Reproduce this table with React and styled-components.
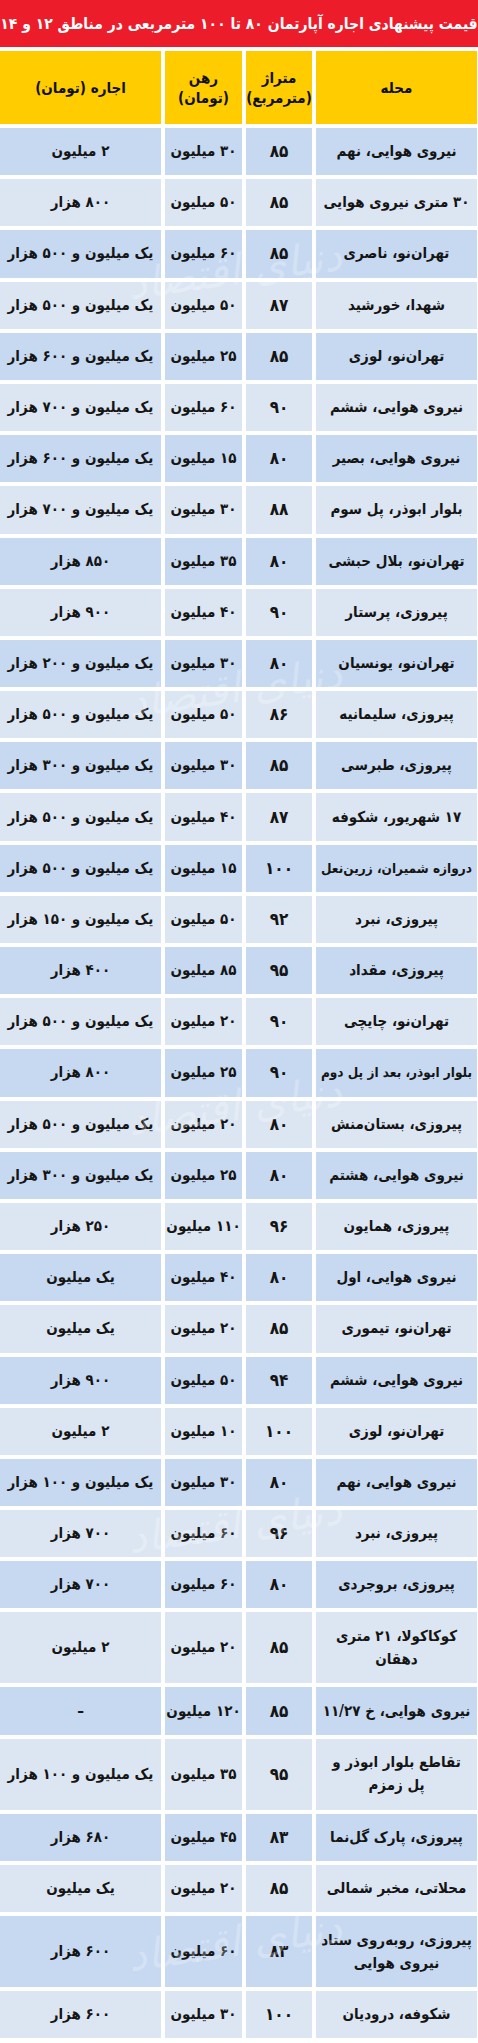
import React from 'react';
import styled, { createGlobalStyle } from 'styled-components';

const GlobalStyle = createGlobalStyle`
	html, body {
		margin: 0;
		padding: 0;
		background: #ffffff;
	}
	body {
		font-family: "DejaVu Sans Condensed", "DejaVu Sans", sans-serif;
	}
`;

const filas = [
	['نیروی هوایی، نهم', '۸۵', '۳۰ میلیون', '۲ میلیون'],
	['۳۰ متری نیروی هوایی', '۸۵', '۵۰ میلیون', '۸۰۰ هزار'],
	['تهران‌نو، ناصری', '۸۵', '۶۰ میلیون', 'یک میلیون و ۵۰۰ هزار'],
	['شهدا، خورشید', '۸۷', '۵۰ میلیون', 'یک میلیون و ۵۰۰ هزار'],
	['تهران‌نو، لوزی', '۸۵', '۲۵ میلیون', 'یک میلیون و ۶۰۰ هزار'],
	['نیروی هوایی، ششم', '۹۰', '۶۰ میلیون', 'یک میلیون و ۷۰۰ هزار'],
	['نیروی هوایی، بصیر', '۸۰', '۱۵ میلیون', 'یک میلیون و ۶۰۰ هزار'],
	['بلوار ابوذر، پل سوم', '۸۸', '۳۰ میلیون', 'یک میلیون و ۷۰۰ هزار'],
	['تهران‌نو، بلال حبشی', '۸۰', '۳۵ میلیون', '۸۵۰ هزار'],
	['پیروزی، پرستار', '۹۰', '۴۰ میلیون', '۹۰۰ هزار'],
	['تهران‌نو، یونسیان', '۸۰', '۳۰ میلیون', 'یک میلیون و ۲۰۰ هزار'],
	['پیروزی، سلیمانیه', '۸۶', '۵۰ میلیون', 'یک میلیون و ۵۰۰ هزار'],
	['پیروزی، طبرسی', '۸۵', '۳۰ میلیون', 'یک میلیون و ۳۰۰ هزار'],
	['۱۷ شهریور، شکوفه', '۸۷', '۴۰ میلیون', 'یک میلیون و ۵۰۰ هزار'],
	['دروازه شمیران، زرین‌نعل', '۱۰۰', '۱۵ میلیون', 'یک میلیون و ۵۰۰ هزار'],
	['پیروزی، نبرد', '۹۲', '۵۰ میلیون', 'یک میلیون و ۱۵۰ هزار'],
	['پیروزی، مقداد', '۹۵', '۸۵ میلیون', '۴۰۰ هزار'],
	['تهران‌نو، چایچی', '۹۰', '۲۰ میلیون', 'یک میلیون و ۵۰۰ هزار'],
	['بلوار ابوذر، بعد از پل دوم', '۹۰', '۲۵ میلیون', '۸۰۰ هزار'],
	['پیروزی، بستان‌منش', '۸۰', '۲۰ میلیون', 'یک میلیون و ۵۰۰ هزار'],
	['نیروی هوایی، هشتم', '۸۰', '۲۵ میلیون', 'یک میلیون و ۳۰۰ هزار'],
	['پیروزی، همایون', '۹۶', '۱۱۰ میلیون', '۲۵۰ هزار'],
	['نیروی هوایی، اول', '۸۰', '۴۰ میلیون', 'یک میلیون'],
	['تهران‌نو، تیموری', '۸۵', '۲۰ میلیون', 'یک میلیون'],
	['نیروی هوایی، ششم', '۹۴', '۵۰ میلیون', '۹۰۰ هزار'],
	['تهران‌نو، لوزی', '۱۰۰', '۱۰ میلیون', '۲ میلیون'],
	['نیروی هوایی، نهم', '۸۰', '۳۰ میلیون', 'یک میلیون و ۱۰۰ هزار'],
	['پیروزی، نبرد', '۹۶', '۶۰ میلیون', '۷۰۰ هزار'],
	['پیروزی، بروجردی', '۸۰', '۶۰ میلیون', '۷۰۰  هزار'],
	[['کوکاکولا، ۲۱ متری', 'دهقان'], '۸۵', '۲۰ میلیون', '۲ میلیون'],
	['نیروی هوایی، خ ۱۱/۲۷', '۸۵', '۱۲۰ میلیون', '–'],
	[['تقاطع بلوار ابوذر و', 'پل زمزم'], '۹۵', '۳۵ میلیون', 'یک میلیون و ۱۰۰ هزار'],
	['پیروزی، پارک گل‌نما', '۸۳', '۴۵ میلیون', '۶۸۰ هزار'],
	['محلاتی، مخبر شمالی', '۸۵', '۲۰ میلیون', 'یک میلیون'],
	[['پیروزی، روبه‌روی ستاد', 'نیروی هوایی'], '۸۳', '۶۰ میلیون', '۶۰۰ هزار'],
	['شکوفه، درودیان', '۱۰۰', '۳۰ میلیون', '۶۰۰ هزار'],
];

// posiciones verticales del sello de agua
const marcas = [270, 688, 1106, 1524, 1942];

const App = () => {
	return (
		<>
			<GlobalStyle />
			<Pagina>
				<Titulo>قیمت پیشنهادی اجاره آپارتمان ۸۰ تا ۱۰۰ مترمربعی در مناطق ۱۲ و ۱۴</Titulo>
				<Tabla>
					<Fila alto="73px">
						<Encabezado>محله</Encabezado>
						<Encabezado>متراژ<br />(مترمربع)</Encabezado>
						<Encabezado>رهن<br />(تومان)</Encabezado>
						<Encabezado>اجاره (تومان)</Encabezado>
					</Fila>
					{filas.map((fila, i) => {
						const doble = Array.isArray(fila[0]);
						const oscuro = i % 2 === 0;
						const largo = !doble && fila[0].length > 21;
						return (
							<Fila key={i} alto={doble ? '71px' : '47.2px'}>
								<Celda oscuro={oscuro} tam={largo ? '13.5px' : '15px'}>
									{doble ? <>{fila[0][0]}<br />{fila[0][1]}</> : fila[0]}
								</Celda>
								<Celda oscuro={oscuro} tam="17px">{fila[1]}</Celda>
								<Celda oscuro={oscuro}>{fila[2]}</Celda>
								<Celda oscuro={oscuro}>{fila[3]}</Celda>
							</Fila>
						);
					})}
				</Tabla>
				{marcas.map(y => (
					<Marca key={y} style={{ top: y }}>دنیای اقتصاد</Marca>
				))}
			</Pagina>
		</>
	);
}

export default App;


const Pagina = styled.div`
	width: 478px;
	direction: rtl;
	display: flex;
	flex-direction: column;
	gap: 4px;
	overflow: hidden;
	position: relative;
`;

const Titulo = styled.div`
	height: 47px;
	background: #ec1c2a;
	color: #ffffff;
	font-weight: bold;
	font-size: 15.5px;
	white-space: nowrap;
	display: flex;
	align-items: center;
	justify-content: center;
	overflow: hidden;
`;

const Tabla = styled.div`
	display: flex;
	flex-direction: column;
	gap: 4px;
	padding-right: 1px;
`;

const Fila = styled.div`
	display: grid;
	grid-template-columns: 161px 66px 77px 161px;
	column-gap: 4px;
	height: ${props => props.alto};
`;

const Encabezado = styled.div`
	background: #ffcc00;
	color: #111111;
	font-weight: bold;
	font-size: 15px;
	line-height: 20px;
	display: flex;
	align-items: center;
	justify-content: center;
	text-align: center;
`;

const Celda = styled.div`
	background: ${props => props.oscuro ? '#c6d9f1' : '#dce6f2'};
	color: #151515;
	font-weight: bold;
	font-size: ${props => props.tam || '15px'};
	line-height: 23px;
	white-space: nowrap;
	display: flex;
	align-items: center;
	justify-content: center;
	text-align: center;
`;

const Marca = styled.div`
	position: absolute;
	left: 110px;
	width: 250px;
	transform: translateY(-50%) rotate(-8deg);
	text-align: center;
	font-family: "DejaVu Serif", serif;
	font-style: italic;
	font-size: 42px;
	color: rgba(255, 255, 255, 0.25);
	pointer-events: none;
	white-space: nowrap;
`;
